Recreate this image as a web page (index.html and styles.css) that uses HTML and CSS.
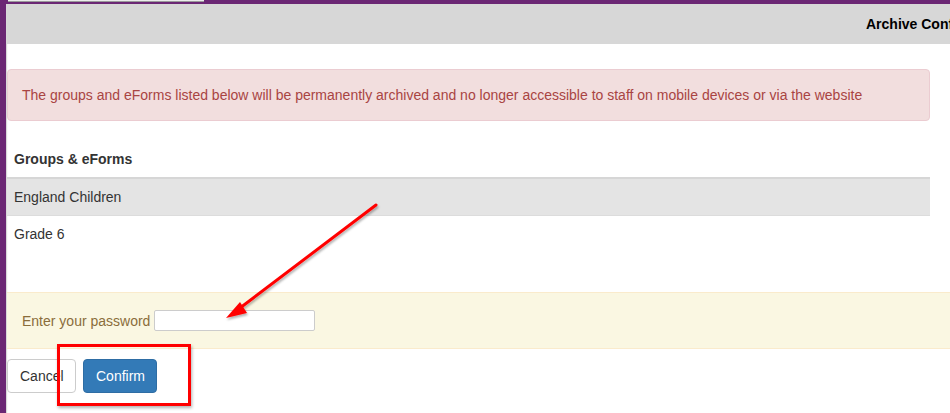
FILE: index.html
```html
<!DOCTYPE html>
<html>
<head>
<meta charset="utf-8">
<link rel="stylesheet" href="styles.css">
</head>
<body>
<div class="page">
  <div class="side"></div>
  <div class="main">
    <div class="topbar"><div class="tab"></div></div>
    <div class="header"><span class="title">Archive Confirmation</span></div>
    <div class="body">
      <div class="alert">The groups and eForms listed below will be permanently archived and no longer accessible to staff on mobile devices or via the website</div>
      <div class="list-title">Groups &amp; eForms</div>
      <div class="table">
        <div class="row odd">England Children</div>
        <div class="row">Grade 6</div>
      </div>
    </div>
    <div class="password">
      <label class="pw-label">Enter your password</label>
      <input class="pw-input" type="password">
    </div>
    <div class="actions">
      <button class="btn btn-default">Cancel</button>
      <button class="btn btn-primary">Confirm</button>
    </div>
  </div>
</div>
<div class="annot-box"></div>
<svg class="annot-arrow" width="950" height="413" viewBox="0 0 950 413">
  <defs>
    <filter id="sh" x="-20%" y="-20%" width="140%" height="140%">
      <feDropShadow dx="1" dy="2" stdDeviation="1.2" flood-color="#000" flood-opacity="0.3"/>
    </filter>
  </defs>
  <g filter="url(#sh)">
    <line x1="376" y1="205" x2="236" y2="311" stroke="#ff0000" stroke-width="3" stroke-linecap="round"/>
    <polygon points="226,318 240,302 247,313" fill="#ff0000"/>
  </g>
</svg>
</body>
</html>
```

FILE: styles.css
```css
html, body {
  margin: 0;
  padding: 0;
  background: #ffffff;
}
body {
  font-family: "Liberation Sans", Arial, Helvetica, sans-serif;
  font-size: 14px;
  color: #333333;
  overflow: hidden;
  width: 950px;
  height: 413px;
}
.page {
  display: flex;
  height: 413px;
}
.side {
  width: 6px;
  flex: 0 0 6px;
  background: #6b2774;
  box-shadow: 1px 0 1px rgba(0,0,0,0.15);
}
.main {
  flex: 1;
  min-width: 0;
  padding-left: 1px;
  overflow: hidden;
}
.topbar {
  height: 4px;
  background: #6b2774;
  margin-left: -1px;
  display: flex;
}
.tab {
  width: 196px;
  height: 1px;
  margin-left: 2px;
  background: #ececec;
  border-bottom: 1px solid #9a9a9a;
}
.header {
  height: 40px;
  background: #d7d7d7;
  display: flex;
  align-items: center;
  white-space: nowrap;
  padding-left: 859px;
}
.title {
  font-weight: bold;
  font-size: 14px;
  color: #000;
}
.body {
  padding-right: 20px;
}
.alert {
  margin-top: 25px;
  padding: 15px 14px;
  line-height: 20px;
  background: #f2dede;
  border: 1px solid #ebccd1;
  border-radius: 4px;
  color: #a94442;
  white-space: nowrap;
}
.list-title {
  font-weight: bold;
  padding: 28px 7px 0 7px;
  line-height: 20px;
  height: 28px;
}
.table {
  display: flex;
  flex-direction: column;
}
.row {
  height: 36px;
  line-height: 36px;
  padding: 0 7px;
  border-top: 1px solid #dcdcdc;
}
.row.odd {
  background: #e4e4e4;
  border-top: 2px solid #d6d6d6;
}
.password {
  margin-top: 40px;
  height: 55px;
  background: #faf7e2;
  border-top: 1px solid #faebcc;
  border-bottom: 1px solid #faebcc;
  display: flex;
  align-items: center;
  padding-left: 15px;
  gap: 4px;
  color: #8a6d3b;
}
.pw-label {
  font-size: 14px;
}
.pw-input {
  width: 161px;
  height: 21px;
  box-sizing: border-box;
  border: 1px solid #cccccc;
  border-radius: 2px;
  background: #fff;
  padding: 0 4px;
  margin: 0;
}
.actions {
  display: flex;
  gap: 7px;
  padding-top: 10px;
}
.btn {
  font-family: "Liberation Sans", Arial, Helvetica, sans-serif;
  font-size: 14px;
  height: 34px;
  border-radius: 4px;
  padding: 0 12px;
  margin: 0;
  cursor: pointer;
}
.btn-default {
  width: 69px;
  background: #fff;
  color: #333;
  border: 1px solid #cccccc;
}
.btn-primary {
  width: 74px;
  background: #337ab7;
  color: #fff;
  border: 1px solid #2e6da4;
}
.annot-box {
  position: absolute;
  left: 57px;
  top: 344px;
  width: 128px;
  height: 56px;
  border: 3px solid #ff0000;
  box-shadow: 1px 2px 3px rgba(0,0,0,0.3);
}
.annot-arrow {
  position: absolute;
  left: 0;
  top: 0;
  pointer-events: none;
}
```
